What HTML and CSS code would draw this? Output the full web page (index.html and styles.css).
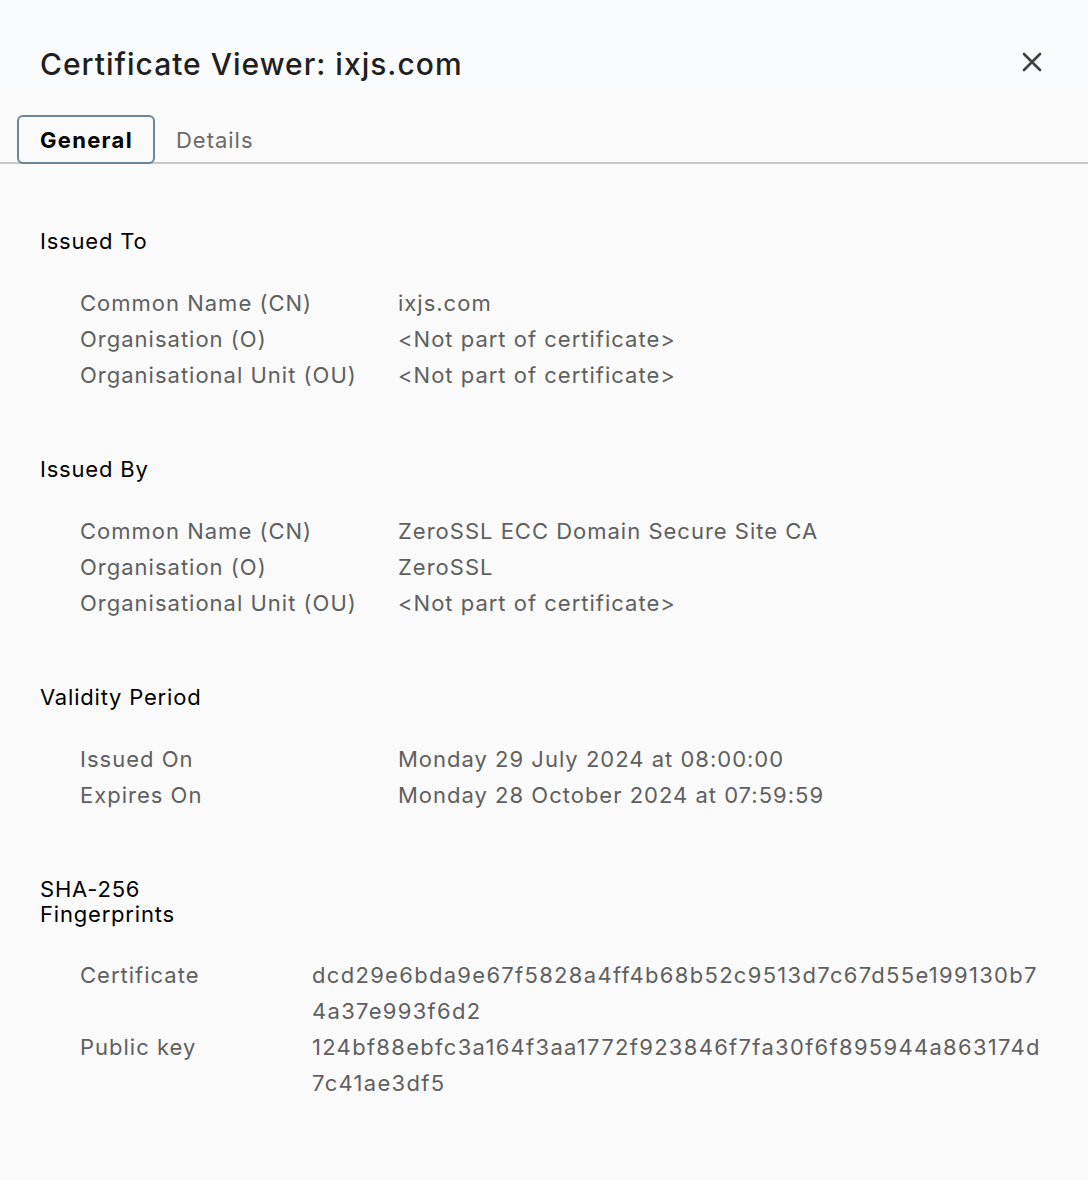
FILE: index.html
```html
<!DOCTYPE html>
<html lang="en">
<head>
<meta charset="utf-8">
<title>Certificate Viewer: ixjs.com</title>
<link rel="stylesheet" href="styles.css">
</head>
<body>
<div class="dialog">
  <header class="header">
    <h1 class="title">Certificate Viewer: ixjs.com</h1>
    <button class="close" aria-label="Close">
      <svg width="20" height="20" viewBox="0 0 20 20"><path d="M2 2 L18 18 M18 2 L2 18" stroke="#3c4043" stroke-width="2.6" stroke-linecap="round" fill="none"/></svg>
    </button>
  </header>
  <nav class="tabs">
    <div class="tab tab-active">General</div>
    <div class="tab">Details</div>
  </nav>
  <main class="content">
    <section class="section">
      <h2 class="heading">Issued To</h2>
      <div class="grid">
        <div class="label">Common Name (CN)</div><div class="value">ixjs.com</div>
        <div class="label">Organisation (O)</div><div class="value">&lt;Not part of certificate&gt;</div>
        <div class="label">Organisational Unit (OU)</div><div class="value">&lt;Not part of certificate&gt;</div>
      </div>
    </section>
    <section class="section">
      <h2 class="heading">Issued By</h2>
      <div class="grid">
        <div class="label">Common Name (CN)</div><div class="value">ZeroSSL ECC Domain Secure Site CA</div>
        <div class="label">Organisation (O)</div><div class="value">ZeroSSL</div>
        <div class="label">Organisational Unit (OU)</div><div class="value">&lt;Not part of certificate&gt;</div>
      </div>
    </section>
    <section class="section">
      <h2 class="heading">Validity Period</h2>
      <div class="grid">
        <div class="label">Issued On</div><div class="value">Monday 29 July 2024 at 08:00:00</div>
        <div class="label">Expires On</div><div class="value">Monday 28 October 2024 at 07:59:59</div>
      </div>
    </section>
    <section class="section">
      <h2 class="heading heading-narrow">SHA-256 Fingerprints</h2>
      <div class="grid grid-fp">
        <div class="label">Certificate</div><div class="value hash">dcd29e6bda9e67f5828a4ff4b68b52c9513d7c67d55e199130b74a37e993f6d2</div>
        <div class="label">Public key</div><div class="value hash">124bf88ebfc3a164f3aa1772f923846f7fa30f6f895944a863174d7c41ae3df5</div>
      </div>
    </section>
  </main>
</div>
</body>
</html>
```

FILE: styles.css
```css
* { box-sizing: border-box; }
html, body {
  margin: 0;
  padding: 0;
  background: #fafafa;
  font-family: Inter, "Noto Sans", "Liberation Sans", sans-serif;
}
.dialog {
  width: 1088px;
  min-height: 1180px;
  background: #fafafa;
}
.header {
  height: 88px;
  background: #fafbfd;
  display: flex;
  align-items: center;
  justify-content: space-between;
  padding: 0 46px 0 40px;
}
.title {
  margin: 40px 0 0;
  font-size: 30px;
  font-weight: 500;
  color: #1f1f1f;
  letter-spacing: 1px;
}
.close {
  border: 0;
  background: transparent;
  padding: 0;
  width: 20px;
  height: 20px;
  display: flex;
  margin-top: 36px;
}
.tabs {
  display: flex;
  align-items: flex-end;
  height: 76px;
  padding-left: 17px;
  border-bottom: 2px solid #c8c8c8;
}
.tab {
  height: 49px;
  display: flex;
  align-items: center;
  font-size: 22px;
  letter-spacing: 1px;
  color: #6a6a6a;
  padding: 0 21px;
  margin-bottom: -2px;
}
.tab-active {
  border: 2.5px solid #6c8598;
  border-radius: 6px;
  color: #000;
  font-weight: 700;
  letter-spacing: 1.3px;
  padding: 0 20px 0 21px;
}
.content {
  padding: 65px 40px 0 40px;
}
.section {
  margin-bottom: 64px;
}
.heading {
  margin: 0 0 31px;
  font-size: 22px;
  font-weight: 400;
  line-height: 25px;
  letter-spacing: 0.8px;
  color: #000;
}
.heading-narrow {
  max-width: 150px;
  margin-bottom: 30px;
}
.grid {
  display: grid;
  grid-template-columns: 318px 1fr;
  padding-left: 40px;
  font-size: 22px;
  line-height: 36px;
  letter-spacing: 1px;
  color: #5f5f5f;
}
.grid-fp {
  grid-template-columns: 232px 1fr;
}
.hash {
  word-break: break-all;
  letter-spacing: 1.3px;
}
```
